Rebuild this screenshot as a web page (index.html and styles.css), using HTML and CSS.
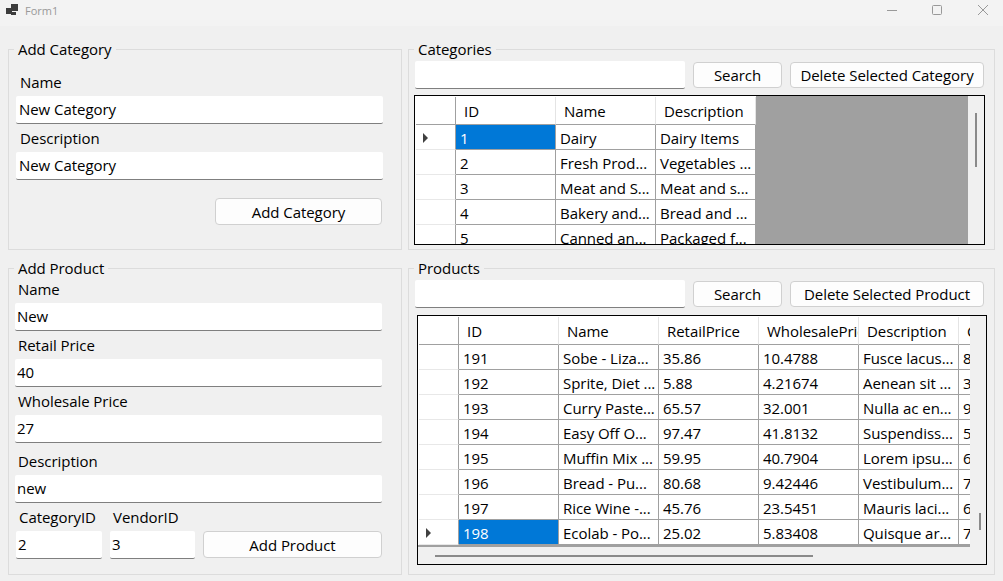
FILE: index.html
```html
<!DOCTYPE html>
<html lang="en">
<head>
    <meta charset="UTF-8">
    <title>Form1</title>
    <link rel="stylesheet" href="styles.css">
</head>
<body>
    <!-- Title bar -->
    <header class="titlebar">
        <svg class="app-icon" width="12" height="11" viewBox="0 0 12 11">
            <rect x="0" y="4" width="6" height="6" fill="#3c3c3c"/>
            <rect x="5" y="0" width="7" height="7" fill="#3c3c3c"/>
            <rect x="5" y="8" width="5" height="3" fill="#3c3c3c"/>
        </svg>
        <span class="title-text">Form1</span>
        <div class="window-buttons">
            <svg width="10" height="10" viewBox="0 0 10 10"><path d="M0 5.5H10" stroke="#999" fill="none"/></svg>
            <svg width="10" height="10" viewBox="0 0 10 10"><rect x="0.5" y="0.5" width="9" height="9" rx="1" stroke="#999" fill="none"/></svg>
            <svg class="close-icon" width="10" height="10" viewBox="0 0 10 10"><path d="M0 0L10 10M10 0L0 10" stroke="#999" fill="none"/></svg>
        </div>
    </header>

    <main class="layout">
        <!-- Add category -->
        <fieldset class="group">
            <legend>Add Category</legend>
            <div class="form-category">
                <label class="field-label first">Name</label>
                <input class="text-input wide" type="text" value="New Category">
                <label class="field-label">Description</label>
                <input class="text-input wide" type="text" value="New Category">
                <button class="btn btn-add-category">Add Category</button>
            </div>
        </fieldset>

        <!-- Categories list -->
        <fieldset class="group">
            <legend>Categories</legend>
            <div class="search-row">
                <input class="text-input search-input" type="text">
                <button class="btn btn-search">Search</button>
                <button class="btn btn-delete btn-raised">Delete Selected Category</button>
            </div>
            <div class="data-grid grid-categories">
                <div class="grid-main">
                    <div class="grid-area">
                        <table class="cells">
                            <thead>
                                <tr><th class="row-head"></th><th>ID</th><th>Name</th><th>Description</th></tr>
                            </thead>
                            <tbody>
                                <tr><th class="row-head current"></th><td class="selected">1</td><td>Dairy</td><td>Dairy Items</td></tr>
                                <tr><th class="row-head"></th><td>2</td><td>Fresh Prod...</td><td>Vegetables ...</td></tr>
                                <tr><th class="row-head"></th><td>3</td><td>Meat and S...</td><td>Meat and s...</td></tr>
                                <tr><th class="row-head"></th><td>4</td><td>Bakery and...</td><td>Bread and ...</td></tr>
                                <tr><th class="row-head"></th><td>5</td><td>Canned an...</td><td>Packaged f...</td></tr>
                            </tbody>
                        </table>
                    </div>
                </div>
                <div class="vscroll"><div class="vthumb"></div></div>
            </div>
        </fieldset>

        <!-- Add product -->
        <fieldset class="group">
            <legend>Add Product</legend>
            <div class="form-product">
                <label class="field-label first">Name</label>
                <input class="text-input" type="text" value="New">
                <label class="field-label">Retail Price</label>
                <input class="text-input" type="text" value="40">
                <label class="field-label">Wholesale Price</label>
                <input class="text-input" type="text" value="27">
                <label class="field-label spaced">Description</label>
                <input class="text-input" type="text" value="new">
                <div class="id-row">
                    <div class="id-field">
                        <label class="field-label">CategoryID</label>
                        <input class="text-input id-category" type="text" value="2">
                    </div>
                    <div class="id-field">
                        <label class="field-label">VendorID</label>
                        <input class="text-input id-vendor" type="text" value="3">
                    </div>
                    <button class="btn btn-add-product">Add Product</button>
                </div>
            </div>
        </fieldset>

        <!-- Products list -->
        <fieldset class="group">
            <legend>Products</legend>
            <div class="search-row">
                <input class="text-input search-input" type="text">
                <button class="btn btn-search">Search</button>
                <button class="btn btn-delete btn-raised">Delete Selected Product</button>
            </div>
            <div class="data-grid grid-products">
                <div class="grid-main">
                    <div class="grid-area">
                        <table class="cells">
                            <thead>
                                <tr><th class="row-head"></th><th>ID</th><th>Name</th><th>RetailPrice</th><th>WholesalePrice</th><th>Description</th><th>CategoryID</th></tr>
                            </thead>
                            <tbody>
                                <tr><th class="row-head"></th><td>191</td><td>Sobe - Liza...</td><td>35.86</td><td>10.4788</td><td>Fusce lacus...</td><td>8</td></tr>
                                <tr><th class="row-head"></th><td>192</td><td>Sprite, Diet ...</td><td>5.88</td><td>4.21674</td><td>Aenean sit ...</td><td>3</td></tr>
                                <tr><th class="row-head"></th><td>193</td><td>Curry Paste...</td><td>65.57</td><td>32.001</td><td>Nulla ac en...</td><td>9</td></tr>
                                <tr><th class="row-head"></th><td>194</td><td>Easy Off O...</td><td>97.47</td><td>41.8132</td><td>Suspendiss...</td><td>5</td></tr>
                                <tr><th class="row-head"></th><td>195</td><td>Muffin Mix ...</td><td>59.95</td><td>40.7904</td><td>Lorem ipsu...</td><td>6</td></tr>
                                <tr><th class="row-head"></th><td>196</td><td>Bread - Pu...</td><td>80.68</td><td>9.42446</td><td>Vestibulum...</td><td>7</td></tr>
                                <tr><th class="row-head"></th><td>197</td><td>Rice Wine -...</td><td>45.76</td><td>23.5451</td><td>Mauris laci...</td><td>6</td></tr>
                                <tr><th class="row-head current"></th><td class="selected">198</td><td>Ecolab - Po...</td><td>25.02</td><td>5.83408</td><td>Quisque ar...</td><td>7</td></tr>
                            </tbody>
                        </table>
                    </div>
                    <div class="hscroll"><div class="hthumb"></div></div>
                </div>
                <div class="vscroll"><div class="vthumb"></div></div>
            </div>
        </fieldset>
    </main>
</body>
</html>
```

FILE: styles.css
```css
/* Page */
body {
    margin: 0;
    width: 1003px;
    height: 581px;
    overflow: hidden;
    background-color: #f0f0f0;
    color: #000;
    font-family: "Open Sans", "Noto Sans", sans-serif;
    font-size: 15px;
    line-height: 20px;
    letter-spacing: -0.05px;
}

/* Title bar */
.titlebar {
    display: flex;
    align-items: center;
    height: 26px;
    background-color: #f3f3f3;
}

.app-icon {
    margin: 0 7px 7px 6px;
}

.title-text {
    margin-bottom: 4px;
    color: #999;
    font-size: 11px;
    letter-spacing: 0;
}

.window-buttons {
    display: flex;
    gap: 35px;
    margin-left: auto;
    margin-right: 15px;
    margin-bottom: 6px;
}

.close-icon {
    margin-left: 1px;
}

/* Group boxes */
.layout {
    display: grid;
    grid-template-columns: 394px 587px;
    grid-template-rows: 211px 317px;
    column-gap: 6px;
    row-gap: 8px;
    padding: 13px 8px 0;
}

.group {
    min-width: 0;
    margin: 0;
    padding: 0 0 0 6px;
    border: 1px solid #dcdcdc;
}

.group legend {
    margin-left: -1px;
    padding: 0 4px;
    line-height: 20px;
}

/* Forms */
.field-label {
    display: block;
    height: 20px;
    margin-top: 5px;
    margin-bottom: 3px;
    padding-left: 3px;
    line-height: 18px;
}

.text-input {
    display: block;
    box-sizing: border-box;
    width: 367px;
    height: 28px;
    margin: 0;
    padding: 0 2px 2px;
    border: none;
    border-bottom: 1px solid #7f7f7f;
    border-radius: 2px;
    outline: none;
    background-color: #fff;
    color: #000;
    font: inherit;
    letter-spacing: inherit;
}

.form-category {
    margin-left: 1px;
}

.form-category .first {
    margin-top: 14px;
}

.form-category .field-label {
    padding-left: 4px;
}

.form-category .text-input {
    padding-left: 3px;
}

.form-product .first {
    margin-top: 2px;
}

.form-product .spaced {
    margin-top: 9px;
}

.id-row {
    display: flex;
    align-items: flex-end;
    margin-left: 1px;
}

.id-category {
    width: 86px;
    margin-right: 8px;
}

.id-vendor {
    width: 85px;
    margin-right: 8px;
}

/* Buttons */
.btn {
    box-sizing: border-box;
    height: 26px;
    padding: 0;
    border: 1px solid #d0d0d0;
    border-radius: 4px;
    background-color: #fdfdfd;
    color: #000;
    font: inherit;
    letter-spacing: inherit;
    text-align: center;
}

.btn-add-category {
    display: block;
    width: 167px;
    height: 27px;
    margin: 18px 0 0 199px;
}

.btn-add-product {
    width: 179px;
    height: 27px;
    margin-bottom: 1px;
}

/* Search row */
.search-row {
    display: flex;
    align-items: flex-start;
    gap: 8px;
    margin-top: 2px;
}

.search-input {
    width: 270px;
}

.btn-search {
    width: 89px;
    margin-top: 1px;
}

.btn-delete {
    width: 194px;
}

.btn-raised {
    margin-top: 1px;
}

/* Data grids */
.data-grid {
    display: flex;
    box-sizing: border-box;
    border: 1px solid #000;
    overflow: hidden;
}

.grid-categories {
    width: 571px;
    height: 150px;
    margin-top: 6px;
    margin-left: -1px;
}

.grid-products {
    width: 570px;
    height: 250px;
    margin-top: 7px;
    margin-left: 2px;
}

.grid-main {
    display: flex;
    flex-direction: column;
    flex: 1;
    min-width: 0;
}

.grid-area {
    flex: 1;
    min-height: 0;
    overflow: hidden;
    background-color: #a0a0a0;
}

.grid-products .grid-area {
    flex: none;
    height: 231px;
}

.cells {
    table-layout: fixed;
    width: 341px;
    border-collapse: separate;
    border-spacing: 0;
    border-top: 1px solid #fff;
    border-left: 1px solid #fff;
    background-color: #fff;
}

.grid-products .cells {
    width: 641px;
}

.cells th,
.cells td {
    box-sizing: border-box;
    width: 100px;
    height: 25px;
    padding: 2px 0 0 4px;
    border-right: 1px solid #a0a0a0;
    border-bottom: 1px solid #a0a0a0;
    overflow: hidden;
    white-space: nowrap;
    font-weight: normal;
    text-align: left;
}

.cells thead th {
    height: 28px;
    padding: 0 0 0 8px;
    border-right-color: #e4e4e4;
}

.cells .row-head {
    width: 40px;
    padding: 2px 0 0;
    border-right-color: #a0a0a0;
    border-bottom-color: #e8e8e8;
}

.cells thead .row-head {
    padding: 0;
    border-right-color: #a0a0a0;
    border-bottom-color: #a0a0a0;
}

.cells .selected {
    background-color: #0078d7;
    color: #fff;
}

/* Current row marker */
.current::before {
    content: "";
    display: block;
    width: 0;
    margin-left: 7px;
    border-left: 5px solid #404040;
    border-top: 5px solid transparent;
    border-bottom: 5px solid transparent;
}

/* Scroll bars */
.vscroll {
    flex: none;
    width: 16px;
}

.vthumb {
    width: 2px;
    background-color: #8a8a8a;
}

.grid-categories .vthumb {
    height: 54px;
    margin: 17px 0 0 7px;
}

.grid-products .vthumb {
    height: 17px;
    margin: 197px 0 0 9px;
}

.hscroll {
    flex: 1;
}

.hthumb {
    width: 378px;
    height: 2px;
    margin: 8px 0 0 17px;
    background-color: #8a8a8a;
}
```
